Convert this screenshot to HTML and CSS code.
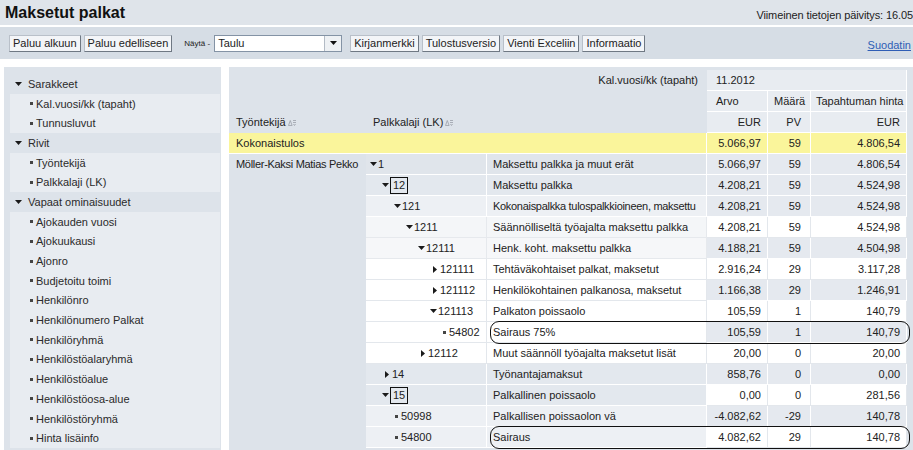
FILE: index.html
```html
<!DOCTYPE html>
<html lang="fi">
<head>
<meta charset="utf-8">
<title>Maksetut palkat</title>
<link rel="stylesheet" href="styles.css">
</head>
<body>
<header class="topbar">
  <h1 class="title">Maksetut palkat</h1>
  <div class="updated">Viimeinen tietojen päivitys: 16.05</div>
</header>
<nav class="toolbar">
  <button class="btn">Paluu alkuun</button>
  <button class="btn">Paluu edelliseen</button>
  <span class="show-label">Näytä -</span>
  <div class="select">
    <span class="select-value">Taulu</span>
    <span class="select-btn"><svg width="7" height="4" viewBox="0 0 7 4"><path d="M0 0H7L3.5 4Z" fill="#111"/></svg></span>
  </div>
  <button class="btn btn-first">Kirjanmerkki</button>
  <button class="btn">Tulostusversio</button>
  <button class="btn">Vienti Exceliin</button>
  <button class="btn">Informaatio</button>
  <a class="filter-link" href="#">Suodatin</a>
</nav>
<main class="main">
  <aside class="nav-panel">
    <div class="grp-head"><svg class="tri-d" width="7" height="4" viewBox="0 0 7 4"><path d="M0 0H7L3.5 4Z"/></svg>Sarakkeet</div>
    <div class="sub">
      <div class="sub-item"><i class="dot"></i>Kal.vuosi/kk (tapaht)</div>
      <div class="sub-item"><i class="dot"></i>Tunnusluvut</div>
    </div>
    <div class="grp-head"><svg class="tri-d" width="7" height="4" viewBox="0 0 7 4"><path d="M0 0H7L3.5 4Z"/></svg>Rivit</div>
    <div class="sub">
      <div class="sub-item"><i class="dot"></i>Työntekijä</div>
      <div class="sub-item"><i class="dot"></i>Palkkalaji (LK)</div>
    </div>
    <div class="grp-head"><svg class="tri-d" width="7" height="4" viewBox="0 0 7 4"><path d="M0 0H7L3.5 4Z"/></svg>Vapaat ominaisuudet</div>
    <div class="sub">
      <div class="sub-item"><i class="dot"></i>Ajokauden vuosi</div>
      <div class="sub-item"><i class="dot"></i>Ajokuukausi</div>
      <div class="sub-item"><i class="dot"></i>Ajonro</div>
      <div class="sub-item"><i class="dot"></i>Budjetoitu toimi</div>
      <div class="sub-item"><i class="dot"></i>Henkilönro</div>
      <div class="sub-item"><i class="dot"></i>Henkilönumero Palkat</div>
      <div class="sub-item"><i class="dot"></i>Henkilöryhmä</div>
      <div class="sub-item"><i class="dot"></i>Henkilöstöalaryhmä</div>
      <div class="sub-item"><i class="dot"></i>Henkilöstöalue</div>
      <div class="sub-item"><i class="dot"></i>Henkilöstöosa-alue</div>
      <div class="sub-item"><i class="dot"></i>Henkilöstöryhmä</div>
      <div class="sub-item"><i class="dot"></i>Hinta lisäinfo</div>
    </div>
  </aside>
  <section class="grid-panel">
    <table class="report">
      <colgroup>
        <col class="c-emp"><col class="c-code"><col class="c-desc"><col class="c-arvo"><col class="c-maara"><col class="c-tap">
      </colgroup>
      <tr>
        <td class="lab lab-right" colspan="3">Kal.vuosi/kk (tapaht)</td>
        <td class="hd hd-first" colspan="3">11.2012</td>
      </tr>
      <tr>
        <td class="lab" colspan="3"></td>
        <td class="hd hd-first">Arvo</td>
        <td class="hd">Määrä</td>
        <td class="hd hd-tap">Tapahtuman hinta</td>
      </tr>
      <tr>
        <td class="lab lab-left">Työntekijä<svg class="sort" width="8" height="7" viewBox="0 0 8 7"><path d="M0.5 6.5L2.3 1.5L4.1 6.5Z" fill="none" stroke="#9aa0a8" stroke-width="0.8"/><path d="M5 1.5H8M5 3.5H8M5.5 5L6.5 6.5L7.5 5" fill="none" stroke="#9aa0a8" stroke-width="0.8"/></svg></td>
        <td class="lab lab-left">Palkkalaji (LK)<svg class="sort" width="8" height="7" viewBox="0 0 8 7"><path d="M0.5 6.5L2.3 1.5L4.1 6.5Z" fill="none" stroke="#9aa0a8" stroke-width="0.8"/><path d="M5 1.5H8M5 3.5H8M5.5 5L6.5 6.5L7.5 5" fill="none" stroke="#9aa0a8" stroke-width="0.8"/></svg></td>
        <td class="lab"></td>
        <td class="hd num n-arvo">EUR</td>
        <td class="hd num n-maara">PV</td>
        <td class="hd num n-tap">EUR</td>
      </tr>
      <tr class="total">
        <td class="tot-label" colspan="3">Kokonaistulos</td>
        <td class="num n-arvo">5.066,97</td>
        <td class="num n-maara">59</td>
        <td class="num n-tap">4.806,54</td>
      </tr>
      <tr>
        <td class="emp tight" rowspan="14">Möller-Kaksi Matias Pekko</td>
        <td class="code h0"><div class="node l0"><svg class="tri-d" width="7" height="4" viewBox="0 0 7 4"><path d="M0 0H7L3.5 4Z"/></svg>1</div></td>
        <td class="desc h0">Maksettu palkka ja muut erät</td>
        <td class="num n-arvo b">5.066,97</td><td class="num n-maara b">59</td><td class="num n-tap b">4.806,54</td>
      </tr>
      <tr>
        <td class="code h1"><div class="node l1"><svg class="tri-d" width="7" height="4" viewBox="0 0 7 4"><path d="M0 0H7L3.5 4Z"/></svg><span class="boxed">12</span></div></td>
        <td class="desc h1">Maksettu palkka</td>
        <td class="num n-arvo b">4.208,21</td><td class="num n-maara b">59</td><td class="num n-tap b">4.524,98</td>
      </tr>
      <tr>
        <td class="code h2"><div class="node l2"><svg class="tri-d" width="7" height="4" viewBox="0 0 7 4"><path d="M0 0H7L3.5 4Z"/></svg>121</div></td>
        <td class="desc h2 tight">Kokonaispalkka tulospalkkioineen, maksettu</td>
        <td class="num n-arvo b">4.208,21</td><td class="num n-maara b">59</td><td class="num n-tap b">4.524,98</td>
      </tr>
      <tr>
        <td class="code h3"><div class="node l3"><svg class="tri-d" width="7" height="4" viewBox="0 0 7 4"><path d="M0 0H7L3.5 4Z"/></svg>1211</div></td>
        <td class="desc h3">Säännölliseltä työajalta maksettu palkka</td>
        <td class="num n-arvo w">4.208,21</td><td class="num n-maara w">59</td><td class="num n-tap w">4.524,98</td>
      </tr>
      <tr>
        <td class="code h4"><div class="node l4"><svg class="tri-d" width="7" height="4" viewBox="0 0 7 4"><path d="M0 0H7L3.5 4Z"/></svg>12111</div></td>
        <td class="desc h4">Henk. koht. maksettu palkka</td>
        <td class="num n-arvo b">4.188,21</td><td class="num n-maara b">59</td><td class="num n-tap b">4.504,98</td>
      </tr>
      <tr>
        <td class="code h5"><div class="node l5"><svg class="tri-r" width="4" height="7" viewBox="0 0 4 7"><path d="M0 0L4 3.5L0 7Z"/></svg>121111</div></td>
        <td class="desc h5">Tehtäväkohtaiset palkat, maksetut</td>
        <td class="num n-arvo w">2.916,24</td><td class="num n-maara w">29</td><td class="num n-tap w">3.117,28</td>
      </tr>
      <tr>
        <td class="code h5"><div class="node l5"><svg class="tri-r" width="4" height="7" viewBox="0 0 4 7"><path d="M0 0L4 3.5L0 7Z"/></svg>121112</div></td>
        <td class="desc h5">Henkilökohtainen palkanosa, maksetut</td>
        <td class="num n-arvo b">1.166,38</td><td class="num n-maara b">29</td><td class="num n-tap b">1.246,91</td>
      </tr>
      <tr>
        <td class="code h5"><div class="node l5"><svg class="tri-d" width="7" height="4" viewBox="0 0 7 4"><path d="M0 0H7L3.5 4Z"/></svg>121113</div></td>
        <td class="desc h5">Palkaton poissaolo</td>
        <td class="num n-arvo w">105,59</td><td class="num n-maara w">1</td><td class="num n-tap w">140,79</td>
      </tr>
      <tr>
        <td class="code h5"><div class="node l6"><i class="leaf"></i>54802</div></td>
        <td class="desc h5 marked">Sairaus 75%<span class="oval"></span></td>
        <td class="num n-arvo b">105,59</td><td class="num n-maara b">1</td><td class="num n-tap b">140,79</td>
      </tr>
      <tr>
        <td class="code h5"><div class="node l4"><svg class="tri-r" width="4" height="7" viewBox="0 0 4 7"><path d="M0 0L4 3.5L0 7Z"/></svg>12112</div></td>
        <td class="desc h5">Muut säännöll työajalta maksetut lisät</td>
        <td class="num n-arvo w">20,00</td><td class="num n-maara w">0</td><td class="num n-tap w">20,00</td>
      </tr>
      <tr>
        <td class="code h1"><div class="node l1"><svg class="tri-r" width="4" height="7" viewBox="0 0 4 7"><path d="M0 0L4 3.5L0 7Z"/></svg>14</div></td>
        <td class="desc h1">Työnantajamaksut</td>
        <td class="num n-arvo b">858,76</td><td class="num n-maara b">0</td><td class="num n-tap b">0,00</td>
      </tr>
      <tr>
        <td class="code h1"><div class="node l1"><svg class="tri-d" width="7" height="4" viewBox="0 0 7 4"><path d="M0 0H7L3.5 4Z"/></svg><span class="boxed">15</span></div></td>
        <td class="desc h1">Palkallinen poissaolo</td>
        <td class="num n-arvo w">0,00</td><td class="num n-maara w">0</td><td class="num n-tap w">281,56</td>
      </tr>
      <tr>
        <td class="code h2"><div class="node l2"><i class="leaf"></i>50998</div></td>
        <td class="desc h2">Palkallisen poissaolon vä</td>
        <td class="num n-arvo b">-4.082,62</td><td class="num n-maara b">-29</td><td class="num n-tap b">140,78</td>
      </tr>
      <tr>
        <td class="code h2"><div class="node l2"><i class="leaf"></i>54800</div></td>
        <td class="desc h2 marked">Sairaus<span class="oval"></span></td>
        <td class="num n-arvo w">4.082,62</td><td class="num n-maara w">29</td><td class="num n-tap w">140,78</td>
      </tr>
    </table>
  </section>
</main>
</body>
</html>
```
FILE: styles.css
```css
* { box-sizing: border-box; }
html, body { margin: 0; padding: 0; }
body {
  width: 913px;
  height: 450px;
  overflow: hidden;
  background: #fff;
  font-family: "Liberation Sans", Arial, sans-serif;
  font-size: 11px;
  color: #222;
}

/* top bar */
.topbar {
  height: 27px;
  background: #dfe4ea;
  border-bottom: 2px solid #fff;
  display: flex;
  align-items: center;
}
.title {
  margin: 0;
  padding-left: 5px;
  font-size: 16px;
  line-height: 20px;
  font-weight: bold;
  color: #111;
  white-space: nowrap;
}
.updated {
  margin-left: auto;
  white-space: nowrap;
  padding-top: 4px;
  letter-spacing: -0.1px;
  color: #222;
}

/* toolbar */
.toolbar {
  height: 32px;
  background: #d6dde5;
  display: flex;
  align-items: center;
  padding: 0 2px 0 9px;
}
.btn {
  height: 17px;
  padding: 0 3px;
  margin: 0 3px 0 0;
  font-family: inherit;
  font-size: 11px;
  line-height: 15px;
  color: #222;
  background: #f3f5f8;
  border: 1px solid;
  border-color: #b9c0c9 #6f7883 #6f7883 #b9c0c9;
  border-radius: 0;
  white-space: nowrap;
}
.btn-first { margin-left: 8px; }
.show-label {
  margin: 0 4px 0 9px;
  font-size: 8px;
  color: #222;
  white-space: nowrap;
}
.select {
  display: flex;
  width: 128px;
  height: 17px;
  background: #fff;
  border: 1px solid #8493a5;
}
.select-value {
  flex: 1;
  padding-left: 3px;
  line-height: 15px;
}
.select-btn {
  width: 17px;
  border-left: 1px solid #b3bbc5;
  background: #eef1f4;
  display: flex;
  align-items: center;
  justify-content: center;
}
.filter-link {
  margin-left: auto;
  align-self: flex-end;
  margin-bottom: 7px;
  color: #2f5db5;
  text-decoration: underline;
  line-height: 13px;
}

/* main layout */
.main {
  display: flex;
  gap: 8px;
  padding: 8px 0 0 4px;
}

/* left navigation */
.nav-panel {
  width: 217px;
  flex-shrink: 0;
  height: 400px;
  background: #dde3ea;
  padding-top: 7px;
  color: #2a2a2a;
}
.grp-head {
  height: 19.7px;
  display: flex;
  align-items: center;
  gap: 6px;
  padding-left: 11px;
  white-space: nowrap;
}
.tri-d { fill: #1a1a1a; flex-shrink: 0; }
.tri-r { fill: #1a1a1a; flex-shrink: 0; }
.sub {
  margin: 0 1px 0 6px;
  background: #e8ecf1;
}
.sub-item {
  height: 19.7px;
  display: flex;
  align-items: center;
  gap: 3px;
  padding-left: 20px;
  white-space: nowrap;
}
.dot {
  width: 3px;
  height: 3px;
  background: #444;
  flex-shrink: 0;
}

/* report table */
.grid-panel {
  flex: 1;
  height: 400px;
  background: #dde3ea;
  padding-top: 3px;
}
.report {
  width: 678px;
  table-layout: fixed;
  border-collapse: separate;
  border-spacing: 0;
  color: #222;
}
.c-emp { width: 137px; }
.c-code { width: 121px; }
.c-desc { width: 220px; }
.c-arvo { width: 61px; }
.c-maara { width: 43px; }
.c-tap { width: 96px; }

.report td {
  height: 21px;
  padding: 0;
  line-height: 20px;
  border-right: 1px solid #fff;
  border-bottom: 1px solid #fff;
  white-space: nowrap;
  vertical-align: middle;
}
.report .lab {
  background: #dde3ea;
  border-color: #dde3ea;
}
.report .lab-right { text-align: right; padding-right: 8px; }
.report .lab-left { padding-left: 7px; }
.sort { margin-left: 2px; vertical-align: 0; }
.report .hd {
  background: #e8ecf1;
  padding-left: 6px;
}
.report .hd-first { padding-left: 9px; }
.report .hd-tap { padding-left: 5px; }

.report .num { text-align: right; padding-left: 0; }
.report .n-arvo { padding-right: 6px; }
.report .n-maara { padding-right: 9px; }
.report .n-tap { padding-right: 6px; }

.total td { background: #faf59b; }
.report .tot-label { padding-left: 7px; }

.report .emp {
  background: #dde3ea;
  border-color: #dde3ea;
  vertical-align: top;
  padding-left: 7px;
}
.report .tight { letter-spacing: -0.3px; }

.report .b { background: #e5e9ef; border-color: #fff; }
.report .w { background: #fff; border-color: #e3e7ec; }

.report .h0 { background: #e0e5eb; border-color: #fff; }
.report .h1 { background: #e3e8ee; border-color: #fff; }
.report .h2 { background: #edf0f4; border-color: #fff; }
.report .h3 { background: #f4f6f8; border-color: #e6e9ed; }
.report .h4 { background: #f6f7f9; border-color: #e6e9ed; }
.report .h5 { background: #fff; border-color: #e3e7ec; }

.node {
  display: flex;
  align-items: center;
  height: 20px;
  white-space: nowrap;
}
.l0 { padding-left: 4px; }
.l1 { padding-left: 16px; }
.l2 { padding-left: 28px; }
.l3 { padding-left: 40px; }
.l4 { padding-left: 52px; }
.l5 { padding-left: 64px; }
.l6 { padding-left: 76px; }
.node .tri-d { margin-right: 1px; }
.node .tri-r { margin: 0 3px 0 3px; }
.leaf {
  width: 3px;
  height: 3px;
  background: #444;
  margin: 0 3px 0 1px;
  flex-shrink: 0;
}
.boxed {
  display: inline-block;
  height: 17px;
  line-height: 15px;
  padding: 0 2px;
  border: 1px solid #111;
}

.report .desc {
  padding-left: 6px;
  overflow: hidden;
}
.report .desc.marked {
  position: relative;
  overflow: visible;
}
.oval {
  position: absolute;
  left: 3px;
  top: -1px;
  width: 420px;
  height: 23px;
  border: 1px solid #111;
  border-radius: 9px;
  pointer-events: none;
}
```
